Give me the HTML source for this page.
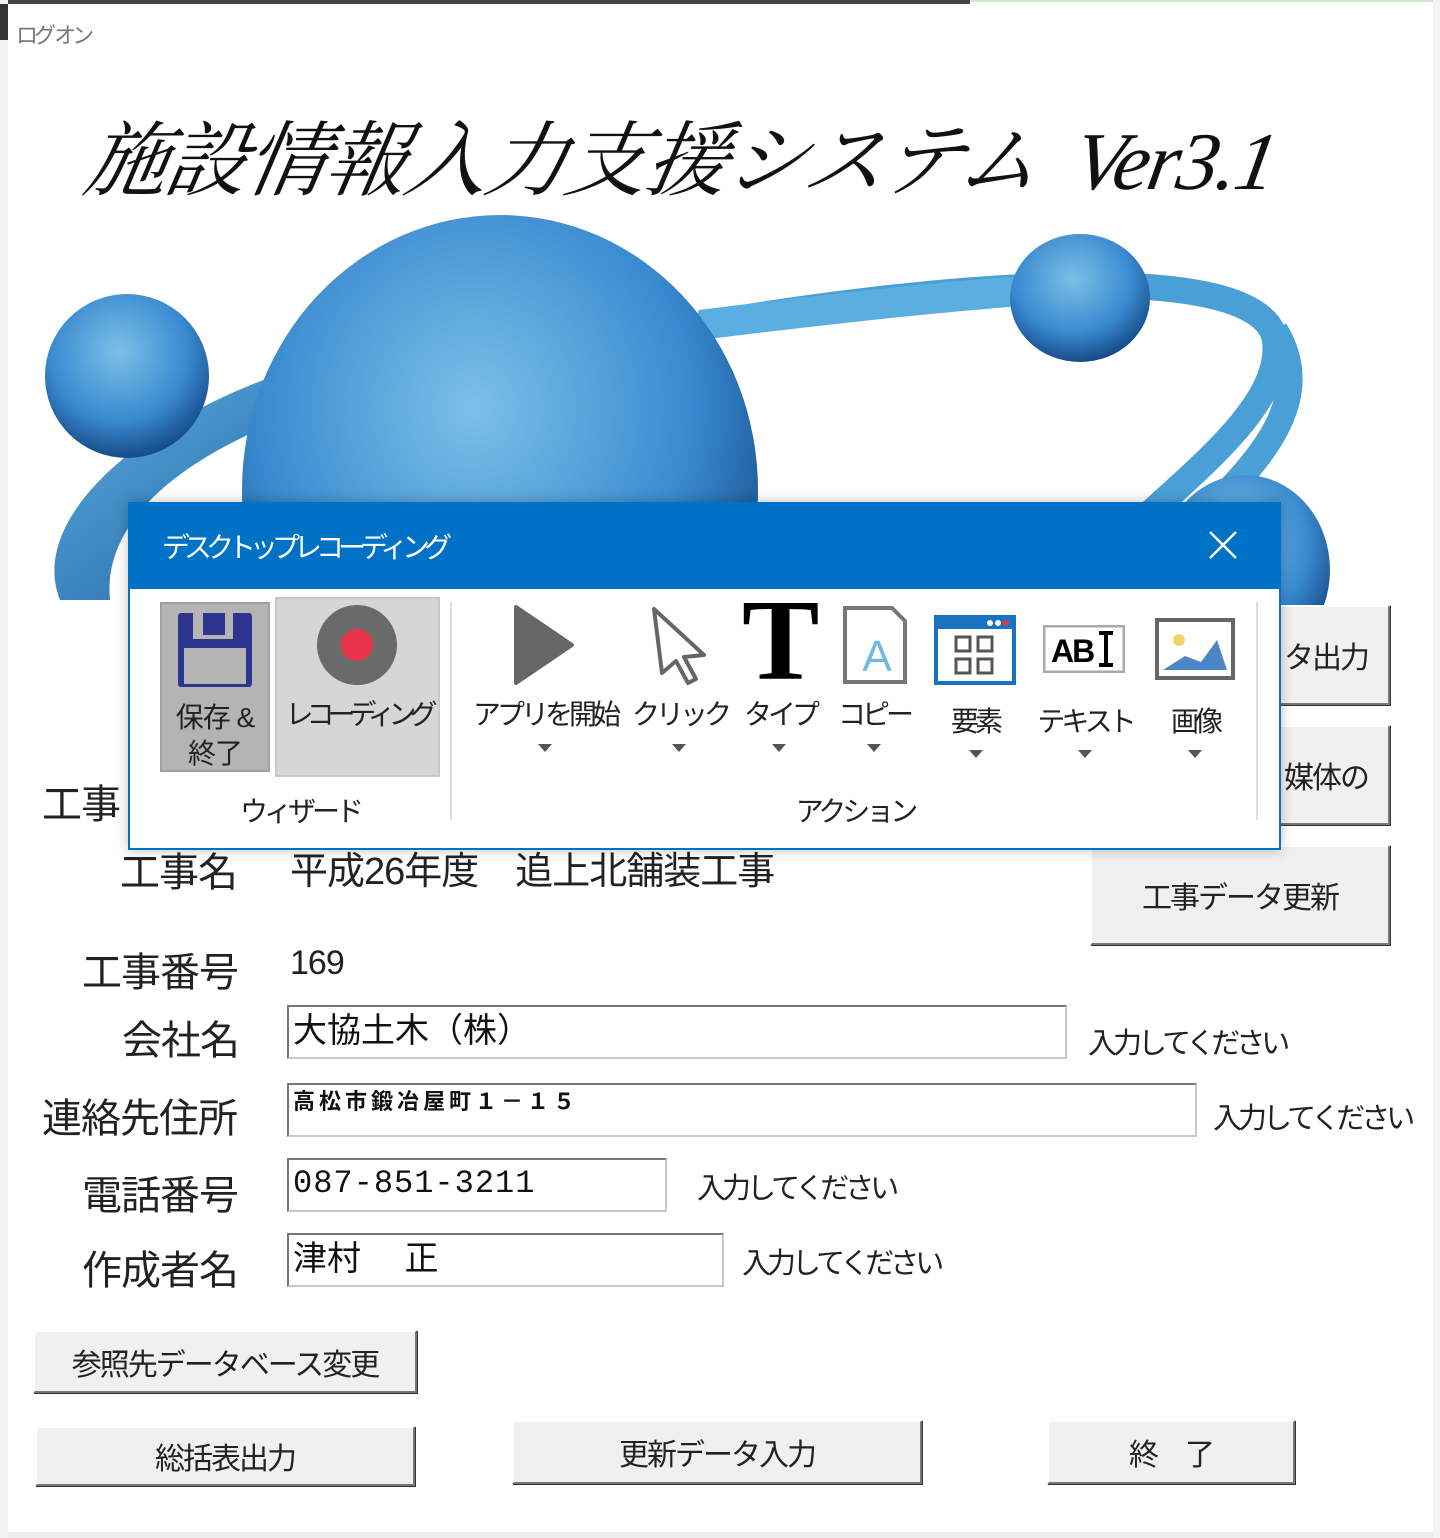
<!DOCTYPE html>
<html><head><meta charset="utf-8"><style>
body{margin:0;width:1440px;height:1538px;background:#fff;position:relative;overflow:hidden;font-family:"Liberation Sans","Noto Sans CJK JP",sans-serif;}
.a{position:absolute}
.lbl{position:absolute;font-size:40px;color:#222;white-space:nowrap;letter-spacing:-1px}
.inp{position:absolute;background:#fff;border:2px solid #c8c8c8;border-top-color:#777;border-left-color:#777;box-sizing:border-box;font-size:34px;color:#111;padding-left:4px;line-height:48px;white-space:nowrap;overflow:hidden}
.hint{position:absolute;font-size:29px;color:#222;white-space:nowrap;letter-spacing:-4px}
.btn{position:absolute;background:#f0f0f0;border:2px solid #fff;border-right-color:#777;border-bottom-color:#777;box-shadow:1px 1px 0 #333;box-sizing:border-box;font-size:30px;color:#222;display:flex;align-items:center;justify-content:center;white-space:nowrap;letter-spacing:-2px}
.ri{position:absolute;text-align:center;font-size:28px;color:#222;white-space:nowrap;letter-spacing:-4px}
.car{position:absolute;width:0;height:0;border-left:7px solid transparent;border-right:7px solid transparent;border-top:8px solid #555}
</style></head><body>
<div class="a" style="left:0;top:0;width:970px;height:4px;background:#444"></div>
<div class="a" style="left:970px;top:0;width:470px;height:2px;background:#cde8c8"></div>
<div class="a" style="left:0;top:0;width:8px;height:1538px;background:#f2f2f2"></div>
<div class="a" style="left:0;top:4px;width:8px;height:36px;background:#333"></div>
<div class="a" style="left:1433px;top:0;width:7px;height:1538px;background:#f4f4f4"></div>
<div class="a" style="left:8px;top:1532px;width:1425px;height:6px;background:#eee"></div>
<div class="a" style="left:16px;top:18px;font-size:22px;color:#777;letter-spacing:-4px">ログ オン</div>

<div class="a" style="left:88px;top:96px;font-family:'Liberation Serif','Noto Serif CJK SC',serif;font-size:82px;font-style:italic;color:#111;white-space:nowrap;transform:skewX(-10deg);letter-spacing:-2px">施設情報入力支援システム&nbsp;&nbsp;Ver3.1</div>

<svg class="a" style="left:0;top:200px" width="1440" height="420">
<defs>
<radialGradient id="g1" cx="0.45" cy="0.35" r="0.7"><stop offset="0" stop-color="#7cc0e8"/><stop offset="0.6" stop-color="#3a8ad0"/><stop offset="1" stop-color="#0e3f7a"/></radialGradient>
<linearGradient id="g2" x1="0" y1="0" x2="1" y2="1"><stop offset="0" stop-color="#5fb0e0"/><stop offset="1" stop-color="#1a5aa0"/></linearGradient>
</defs>
<path d="M60 400 C 20 300 200 170 420 140 L 420 180 C 230 220 100 300 110 400 Z" fill="url(#g2)"/>
<path d="M700 125 C 900 90 1260 50 1275 140 C 1285 220 1150 300 1060 400 L 1110 400 C 1220 300 1330 220 1275 130" fill="none" stroke="#4aa0d6" stroke-width="26"/>
<path d="M700 125 C 900 100 1100 80 1140 90" fill="none" stroke="#5aaee0" stroke-width="30"/>
<ellipse cx="500" cy="290" rx="258" ry="275" fill="url(#g1)"/>
<ellipse cx="127" cy="176" rx="82" ry="82" fill="url(#g1)"/>
<ellipse cx="1080" cy="98" rx="70" ry="64" fill="url(#g1)"/>
<ellipse cx="1245" cy="370" rx="85" ry="95" fill="url(#g1)"/>
</svg>

<div class="btn" style="left:1270px;top:605px;width:120px;height:100px;justify-content:flex-end;padding-right:20px">タ出力</div>
<div class="btn" style="left:1270px;top:725px;width:120px;height:100px;justify-content:flex-end;padding-right:20px">媒体の</div>
<div class="btn" style="left:1090px;top:845px;width:300px;height:100px">工事データ更新</div>

<div class="lbl" style="left:42px;top:772px">工事</div>
<div class="lbl" style="left:120px;top:840px">工事名</div>
<div class="lbl" style="left:290px;top:840px;font-size:38px;letter-spacing:-1px">平成26年度　追上北舗装工事</div>
<div class="lbl" style="left:82px;top:940px">工事番号</div>
<div class="lbl" style="left:290px;top:944px;font-size:34px">169</div>
<div class="lbl" style="left:122px;top:1008px">会社名</div>
<div class="inp" style="left:287px;top:1005px;width:780px;height:54px">大協土木（株）</div>
<div class="hint" style="left:1088px;top:1020px">入力してください</div>
<div class="lbl" style="left:42px;top:1086px">連絡先住所</div>
<div class="inp" style="left:287px;top:1083px;width:910px;height:54px;font-size:22px;font-weight:bold;line-height:34px;letter-spacing:4px">高松市鍛冶屋町１－１５</div>
<div class="hint" style="left:1213px;top:1095px">入力してください</div>
<div class="lbl" style="left:82px;top:1163px">電話番号</div>
<div class="inp" style="left:287px;top:1158px;width:380px;height:54px;font-family:'Liberation Mono',monospace;font-size:32px;letter-spacing:1px">087-851-3211</div>
<div class="hint" style="left:697px;top:1165px">入力してください</div>
<div class="lbl" style="left:82px;top:1238px">作成者名</div>
<div class="inp" style="left:287px;top:1233px;width:437px;height:54px">津村　 正</div>
<div class="hint" style="left:742px;top:1240px">入力してください</div>

<div class="btn" style="left:33px;top:1330px;width:384px;height:63px">参照先データベース変更</div>
<div class="btn" style="left:35px;top:1426px;width:380px;height:60px">総括表出力</div>
<div class="btn" style="left:512px;top:1420px;width:410px;height:64px">更新データ入力</div>
<div class="btn" style="left:1047px;top:1420px;width:248px;height:64px">終　了</div>

<div class="a" style="left:128px;top:502px;width:1153px;height:348px;background:#fff;border:2px solid #0072c6;box-sizing:border-box;box-shadow:0 0 12px rgba(0,0,0,0.25)">
 <div class="a" style="left:0;top:0;width:1149px;height:85px;background:#0072c6"></div>
 <div class="a" style="left:32px;top:22px;font-size:28px;color:#fff;letter-spacing:-6px">デスクトップレコーディング</div>
 <svg class="a" style="left:1078px;top:26px" width="30" height="30"><path d="M2 2L28 28M28 2L2 28" stroke="#fff" stroke-width="2.5"/></svg>
</div>
<div class="a" style="left:160px;top:602px;width:110px;height:170px;background:#b4b4b4;border:2px solid #a0a0a0;box-sizing:border-box"></div>
<div class="a" style="left:275px;top:597px;width:165px;height:180px;background:#d6d6d6;border:2px solid #c8c8c8;box-sizing:border-box"></div>
<svg class="a" style="left:175px;top:610px" width="80" height="80"><rect x="3" y="3" width="74" height="74" rx="3" fill="#2d3590"/><rect x="9" y="36" width="62" height="38" fill="#b4b4b4"/><rect x="18" y="3" width="40" height="26" fill="#b4b4b4"/><rect x="28" y="3" width="22" height="22" fill="#2d3590"/><rect x="9" y="32" width="62" height="6" fill="#2d3590"/></svg>
<svg class="a" style="left:315px;top:603px" width="84" height="84"><circle cx="42" cy="42" r="40" fill="#6a6a6a"/><circle cx="42" cy="42" r="16" fill="#e8334a"/></svg>
<div class="ri" style="left:162px;top:700px;width:106px;line-height:36px;letter-spacing:-1px">保存 &amp;<br>終了</div>
<div class="ri" style="left:278px;top:693px;width:160px;letter-spacing:-7px">レコーディング</div>
<div class="a" style="left:450px;top:602px;width:2px;height:218px;background:#ddd"></div>
<div class="a" style="left:1256px;top:602px;width:2px;height:218px;background:#ddd"></div>
<div class="ri" style="left:220px;top:790px;width:160px">ウィザード</div>
<div class="ri" style="left:775px;top:790px;width:160px">アクション</div>

<svg class="a" style="left:512px;top:605px" width="64" height="80"><path d="M4 2 L60 40 L4 78 Z" fill="#666" stroke="#666" stroke-linejoin="round" stroke-width="4"/></svg>
<svg class="a" style="left:650px;top:605px" width="60" height="80"><path d="M4 4 L54 50 L34 52 L46 74 L38 78 L26 56 L12 68 Z" fill="#fff" stroke="#666" stroke-width="4" stroke-linejoin="round"/></svg>
<div class="a" style="left:742px;top:586px;font-family:'Liberation Serif',serif;font-size:116px;font-weight:bold;color:#000;line-height:110px">T</div>
<svg class="a" style="left:842px;top:605px" width="66" height="80"><path d="M3 3 H50 L63 16 V77 H3 Z" fill="#fff" stroke="#777" stroke-width="4"/><text x="35" y="66" font-family="Liberation Sans" font-size="44" fill="#6fb8e6" text-anchor="middle">A</text></svg>
<svg class="a" style="left:934px;top:615px" width="82" height="70"><rect x="0" y="0" width="82" height="70" fill="#1a73c0"/><rect x="4" y="14" width="74" height="52" fill="#fff"/><circle cx="56" cy="8" r="3" fill="#fff"/><circle cx="64" cy="8" r="3" fill="#fff"/><circle cx="72" cy="8" r="3" fill="#e8334a"/><g fill="none" stroke="#555" stroke-width="3"><rect x="22" y="22" width="14" height="14"/><rect x="44" y="22" width="14" height="14"/><rect x="22" y="44" width="14" height="14"/><rect x="44" y="44" width="14" height="14"/></g></svg>
<svg class="a" style="left:1043px;top:625px" width="82" height="48"><rect x="1" y="1" width="80" height="46" fill="#fff" stroke="#aaa" stroke-width="3"/><text x="8" y="37" font-family="Liberation Sans" font-weight="bold" font-size="32" fill="#000" letter-spacing="-2">AB</text><path d="M56 8 H70 M63 8 V40 M56 40 H70" stroke="#000" stroke-width="4"/></svg>
<svg class="a" style="left:1155px;top:618px" width="80" height="62"><rect x="2" y="2" width="76" height="58" fill="#fff" stroke="#666" stroke-width="4"/><circle cx="24" cy="22" r="6" fill="#f0d36c"/><path d="M8 52 L30 38 L46 44 L62 22 L72 52 Z" fill="#4d86c6"/></svg>
<div class="ri" style="left:465px;top:693px;width:160px">アプリを開始</div>
<div class="ri" style="left:630px;top:693px;width:100px">クリック</div>
<div class="ri" style="left:740px;top:693px;width:80px">タイプ</div>
<div class="ri" style="left:834px;top:693px;width:80px">コピー</div>
<div class="ri" style="left:935px;top:700px;width:80px">要素</div>
<div class="ri" style="left:1030px;top:700px;width:110px">テキスト</div>
<div class="ri" style="left:1155px;top:700px;width:80px">画像</div>
<div class="car" style="left:538px;top:744px"></div>
<div class="car" style="left:672px;top:744px"></div>
<div class="car" style="left:772px;top:744px"></div>
<div class="car" style="left:867px;top:744px"></div>
<div class="car" style="left:969px;top:750px"></div>
<div class="car" style="left:1078px;top:750px"></div>
<div class="car" style="left:1188px;top:750px"></div>
</body></html>
